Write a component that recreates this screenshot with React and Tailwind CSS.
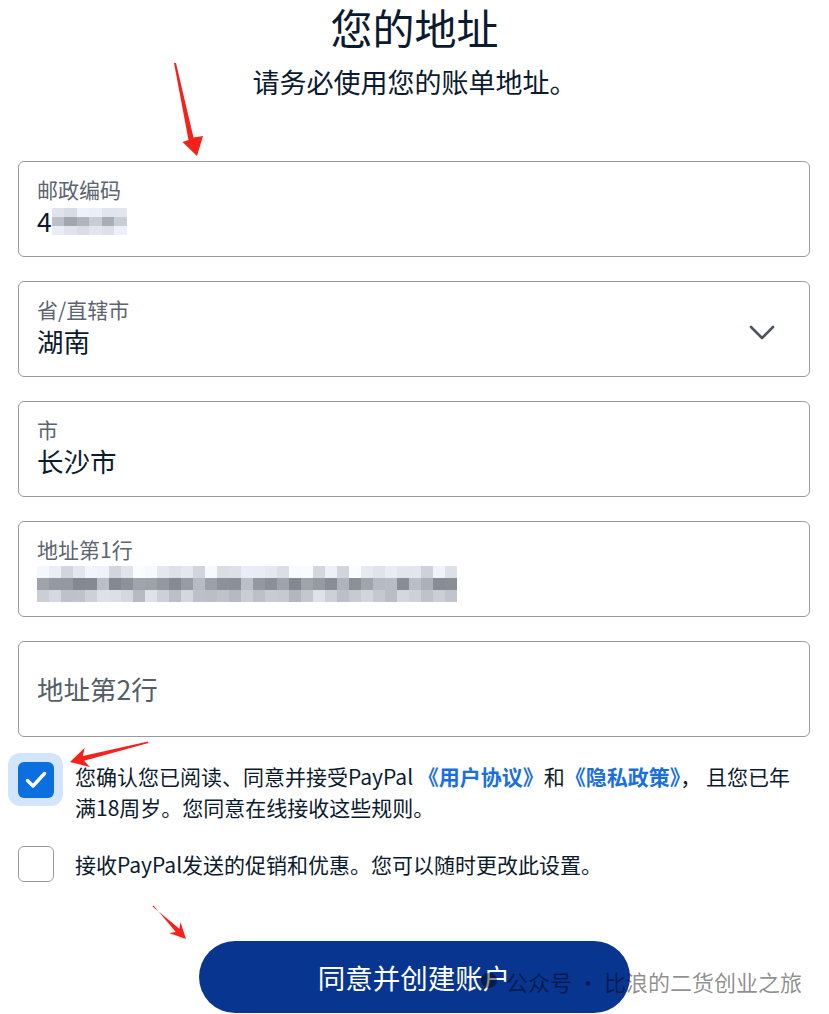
import React from 'react';

const FONT = "font-['Noto_Sans_CJK_SC','Noto_Sans',sans-serif]";

// deterministic noise for the pixelated (blurred) values
const noise = (i) => {
  const x = Math.sin(i * 12.9898 + 78.233) * 43758.5453;
  return x - Math.floor(x);
};

const Mosaic = ({ cols, rows, cellW, cellH, seed, tones }) => (
  <div className="flex flex-col">
    {Array.from({ length: rows }).map((_, r) => (
      <div key={r} className="flex">
        {Array.from({ length: cols }).map((_, c) => {
          const [base, spread] = tones[r % tones.length];
          const v = Math.round(base + noise(seed + r * 97 + c) * spread);
          return (
            <div
              key={c}
              style={{
                width: cellW,
                height: cellH,
                background: `rgb(${v},${v + 4},${Math.min(255, v + 12)})`,
              }}
            />
          );
        })}
      </div>
    ))}
  </div>
);

const Field = ({ label, children, right }) => (
  <div className="flex items-start justify-between h-[96px] rounded-[6px] border border-[#989a9c] bg-white px-[18px] pt-[14px]">
    <div className="flex flex-col">
      <div className="text-[21px] leading-[26px] text-[#5b6470]">{label}</div>
      <div className="mt-[2px] flex items-center text-[26.5px] leading-[34px] text-[#0b1a2e]">
        {children}
      </div>
    </div>
    {right}
  </div>
);

const Chevron = () => (
  <svg width="26" height="16" viewBox="0 0 26 16" className="mt-[29px] mr-[16px]">
    <path d="M2 2 L13 13 L24 2" fill="none" stroke="#4b5561" strokeWidth="2.6" strokeLinecap="round" strokeLinejoin="round" />
  </svg>
);

const Arrows = () => (
  <svg className="absolute inset-0 pointer-events-none" width="829" height="1014" viewBox="0 0 829 1014">
    <polygon
      fill="#f5221b"
      points="174,63 176,63 193.5,137.5 203,136 197,156 182.5,142 188.5,140"
    />
    <polygon
      fill="#f5221b"
      points="148,741.5 82.9,756 84.7,747.7 70,762 89.9,766.9 84.1,760.8 148.5,743"
    />
    <polygon
      fill="#f5221b"
      points="152.5,906.5 179.4,928.7 180.5,922 186,939 169.1,933.1 175.8,932.1 153.5,905.5"
    />
  </svg>
);

export default function App() {
  return (
    <div className={`relative w-[829px] h-[1014px] overflow-hidden bg-white ${FONT}`}>
      <header className="flex flex-col items-center">
        <h1 className="mt-[3px] text-[42px] leading-[48px] font-normal text-[#0b1a2e]">您的地址</h1>
        <p className="mt-[14px] text-[27px] leading-[34px] text-[#0b1a2e]">请务必使用您的账单地址。</p>
      </header>

      <div className="mt-[62px] ml-[18px] w-[792px] flex flex-col gap-[24px]">
        <Field label="邮政编码">
          <span>4</span>
          <Mosaic
            cols={6}
            rows={3}
            cellW={12.5}
            cellH={9}
            seed={3}
            tones={[[205, 40], [160, 45], [200, 40]]}
          />
        </Field>

        <Field label="省/直辖市" right={<Chevron />}>
          <span>湖南</span>
        </Field>

        <Field label="市">
          <span>长沙市</span>
        </Field>

        <Field label="地址第1行">
          <div className="mt-[2px]">
            <Mosaic
              cols={35}
              rows={3}
              cellW={12}
              cellH={12}
              seed={41}
              tones={[[205, 45], [128, 60], [178, 45]]}
            />
          </div>
        </Field>

        <div className="flex items-center h-[96px] rounded-[6px] border border-[#989a9c] bg-white px-[18px]">
          <span className="text-[26.5px] leading-[34px] text-[#545e69]">地址第2行</span>
        </div>
      </div>

      <div className="mt-[16px] ml-[8px] flex items-start">
        <div className="flex items-center justify-center w-[55px] h-[53px] rounded-[12px] bg-[#d3e5fb]">
          <div className="flex items-center justify-center w-[36px] h-[36px] rounded-[6px] bg-[#0b6fe0]">
            <svg width="36" height="36" viewBox="0 0 36 36">
              <path d="M9.5 18.5 L15 24 L26.5 11.5" fill="none" stroke="#fff" strokeWidth="3.4" strokeLinecap="round" strokeLinejoin="round" />
            </svg>
          </div>
        </div>
        <p className="ml-[12px] mt-[8px] w-[724px] text-[21px] leading-[31px] text-[#0b1a2e]">
          您确认您已阅读、同意并接受PayPal <a className="font-bold text-[#1a6fe0]">《用户协议》</a>和<a className="font-bold text-[#1a6fe0]">《隐私政策》</a>， 且您已年满18周岁。您同意在线接收这些规则。
        </p>
      </div>

      <div className="mt-[23px] ml-[18px] flex items-center">
        <div className="w-[36px] h-[36px] rounded-[6px] border border-[#9a9a9a] bg-white" />
        <p className="ml-[21px] text-[21px] leading-[31px] text-[#0b1a2e]">
          接收PayPal发送的促销和优惠。您可以随时更改此设置。
        </p>
      </div>

      <div className="mt-[59px] flex justify-center">
        <button className="ml-[-1px] w-[431px] h-[72px] rounded-full bg-[#073590] text-[27.5px] leading-[34px] text-white">
          同意并创建账户
        </button>
      </div>

      <div className="absolute left-[478px] top-[966px] flex items-center text-[22px] leading-[30px] text-black/45">
        <svg width="22" height="22" viewBox="0 0 22 22" className="mr-[6px]">
          <path d="M11 3 C6 3 3 6.5 3 10.5 C3 13 4.3 15 6.3 16.3 L5.5 19.5 L9.3 17.6 C9.9 17.8 10.4 17.9 11 17.9 C16 17.9 19 14.5 19 10.5 C19 6.5 16 3 11 3 Z" fill="currentColor" />
        </svg>
        <span>公众号</span>
        <span className="mx-[5px]">·</span>
        <span>比浪的二货创业之旅</span>
      </div>

      <Arrows />
    </div>
  );
}
